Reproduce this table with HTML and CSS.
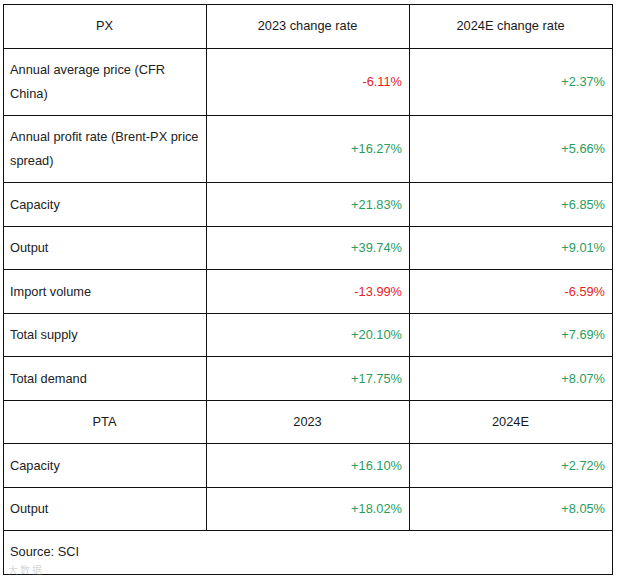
FILE: index.html
```html
<!DOCTYPE html>
<html>
<head>
<meta charset="utf-8">
<link rel="stylesheet" href="styles.css">
</head>
<body>
<div class="wrap">
<table class="data">
  <tr class="head"><td>PX</td><td>2023 change rate</td><td>2024E change rate</td></tr>
  <tr><td class="label">Annual average price (CFR China)</td><td class="num neg">-6.11%</td><td class="num pos">+2.37%</td></tr>
  <tr><td class="label">Annual profit rate (Brent-PX price spread)</td><td class="num pos">+16.27%</td><td class="num pos">+5.66%</td></tr>
  <tr><td class="label">Capacity</td><td class="num pos">+21.83%</td><td class="num pos">+6.85%</td></tr>
  <tr><td class="label">Output</td><td class="num pos">+39.74%</td><td class="num pos">+9.01%</td></tr>
  <tr><td class="label">Import volume</td><td class="num neg">-13.99%</td><td class="num neg">-6.59%</td></tr>
  <tr><td class="label">Total supply</td><td class="num pos">+20.10%</td><td class="num pos">+7.69%</td></tr>
  <tr><td class="label">Total demand</td><td class="num pos">+17.75%</td><td class="num pos">+8.07%</td></tr>
  <tr class="head"><td>PTA</td><td>2023</td><td>2024E</td></tr>
  <tr><td class="label">Capacity</td><td class="num pos">+16.10%</td><td class="num pos">+2.72%</td></tr>
  <tr><td class="label">Output</td><td class="num pos">+18.02%</td><td class="num pos">+8.05%</td></tr>
  <tr><td class="label source" colspan="3">Source: SCI</td></tr>
</table>
<div class="watermark">大数据</div>
</div>
</body>
</html>
```
FILE: styles.css
```css
html, body {
  margin: 0;
  padding: 0;
  background: #ffffff;
}
body {
  font-family: "Liberation Sans", Arial, sans-serif;
  font-size: 12.8px;
  color: #222222;
}
.wrap {
  position: relative;
  padding: 4px 0 0 3px;
}
.data {
  border-collapse: collapse;
  width: 610px;
  table-layout: fixed;
}
.data td {
  border: 1px solid #111111;
  padding: 9.3px 7px 9.3px 6px;
  line-height: 23.9px;
  vertical-align: middle;
  width: 33.33%;
}
.data tr:last-child td {
  padding-top: 9px;
  padding-bottom: 10px;
}
.head td {
  text-align: center;
  color: #1a1a1a;
}
.data td.label {
  text-align: left;
  padding-right: 4px;
}
.num {
  text-align: right;
}
.neg {
  color: #e3231f;
}
.pos {
  color: #2a9d5c;
}
.watermark {
  position: absolute;
  left: 8px;
  top: 564px;
  font-family: "Noto Sans CJK SC", sans-serif;
  font-size: 10px;
  line-height: 11px;
  color: rgba(150, 150, 150, 0.4);
  letter-spacing: 2px;
}
```
